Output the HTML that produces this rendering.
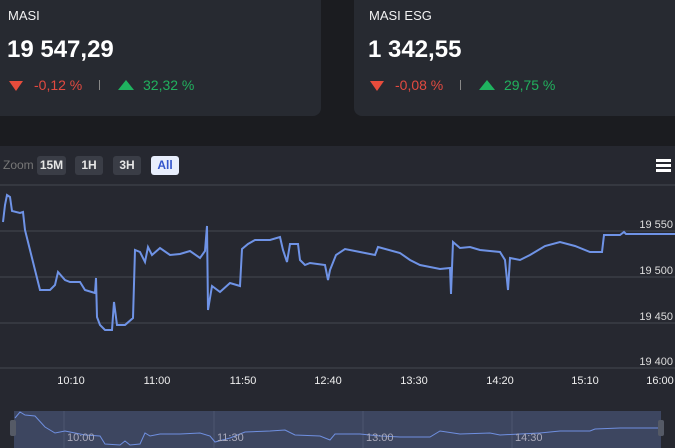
<!DOCTYPE html><html><head><style>
body{margin:0;width:675px;height:448px;background:#1b1c20;position:relative;overflow:hidden;font-family:"Liberation Sans",sans-serif;}
.card{position:absolute;top:-10px;height:126px;background:#272a31;border-radius:0 0 8px 8px;color:#fff}
.t{position:absolute;font-size:13px;color:#f2f2f2}
.big{position:absolute;font-size:24px;font-weight:bold;color:#fff}
.dn{position:absolute;width:0;height:0;border-left:7px solid transparent;border-right:7px solid transparent;border-top:10px solid #e74c3c}
.up{position:absolute;width:0;height:0;border-left:8px solid transparent;border-right:8px solid transparent;border-bottom:10px solid #1fb35f}
.r{position:absolute;font-size:14px;color:#e24a40}.g{position:absolute;font-size:14px;color:#21b15e}
.sep{position:absolute;width:1px;height:10px;background:#888}
.btn{position:absolute;top:156px;height:19px;border-radius:3px;background:#3a3d46;color:#e6e6e6;font-size:12px;font-weight:bold;text-align:center;line-height:19px}
.yl{position:absolute;right:2px;font-size:11px;color:#ddd}
.xl{position:absolute;top:375px;font-size:11px;color:#eee;transform:translateX(-50%)}
.nl{position:absolute;top:432px;font-size:11px;color:#aab}
</style></head><body>
<div class="card" style="left:-10px;width:331px"></div>
<div class="card" style="left:354px;width:340px"></div>
<div class="t" style="left:8px;top:8px">MASI</div>
<div class="big" style="left:7px;top:36px">19 547,29</div>
<div class="dn" style="left:9px;top:81px"></div><div class="r" style="left:34px;top:77px">-0,12 %</div>
<div class="sep" style="left:99px;top:80px"></div>
<div class="up" style="left:118px;top:80px"></div><div class="g" style="left:143px;top:77px">32,32 %</div>
<div class="t" style="left:369px;top:8px">MASI ESG</div>
<div class="big" style="left:368px;top:36px">1 342,55</div>
<div class="dn" style="left:370px;top:81px"></div><div class="r" style="left:395px;top:77px">-0,08 %</div>
<div class="sep" style="left:460px;top:80px"></div>
<div class="up" style="left:479px;top:80px"></div><div class="g" style="left:504px;top:77px">29,75 %</div>
<div style="position:absolute;left:0;top:146px;width:675px;height:302px;background:#262830"></div>
<div style="position:absolute;left:3px;top:158px;font-size:12px;color:#777">Zoom</div>
<div class="btn" style="left:37px;width:29px">15M</div>
<div class="btn" style="left:75px;width:28px">1H</div>
<div class="btn" style="left:113px;width:28px">3H</div>
<div class="btn" style="left:151px;width:28px;background:#e8eefc;color:#3355cc">All</div>
<div style="position:absolute;left:656px;top:159px;width:15px;height:3px;background:#fff;box-shadow:0 5px 0 #fff,0 10px 0 #fff"></div>
<svg style="position:absolute;left:0;top:0" width="675" height="448">
<g stroke="#3a3d45" stroke-width="1.5"><line x1="0" y1="185" x2="675" y2="185"/><line x1="0" y1="231" x2="675" y2="231"/><line x1="0" y1="277" x2="675" y2="277"/><line x1="0" y1="323" x2="675" y2="323"/><line x1="0" y1="368" x2="675" y2="368"/></g>
<polyline fill="none" stroke="#6f93e6" stroke-width="2" points="3,222 5,205 7,195 10,197 12,211 20,213 23,212 25,230 30,250 35,270 40,290 50,290 55,285 58,272 65,280 70,282 80,282 85,290 95,293 96,278 97,317 100,325 105,330 112,330 114,302 117,325 125,325 133,318 135,250 140,252 145,262 148,247 152,255 160,248 170,255 180,254 190,251 200,258 205,251 207,226 208,310 212,286 220,292 230,283 240,286 242,249 248,244 255,240 270,240 280,237 283,250 287,262 290,244 298,244 300,260 305,265 310,263 325,265 328,280 330,270 336,255 345,249 360,252 375,255 378,247 400,253 410,260 420,265 440,269 450,268 451,294 453,242 460,248 470,247 480,250 490,251 500,252 505,260 508,290 510,258 520,260 530,255 545,246 560,242 575,246 590,252 602,252 604,235 620,235 624,232 626,234 675,234"/>
<rect x="14" y="411" width="647" height="37" fill="#3d4660"/>
<g stroke="#4d5670"><line x1="64" y1="411" x2="64" y2="448"/><line x1="214" y1="411" x2="214" y2="448"/><line x1="363" y1="411" x2="363" y2="448"/><line x1="512" y1="411" x2="512" y2="448"/></g>
<polyline fill="none" stroke="#6f8fe0" stroke-width="1" points="15,418 20,412 25,415 35,416 45,427 55,433 65,431 75,433 85,435 100,436 105,444 120,445 125,441 130,445 140,444 145,433 150,436 160,434 180,434 200,433 210,436 215,442 230,438 245,432 270,431 285,430 295,435 320,436 330,440 335,434 360,434 380,436 400,437 430,437 440,431 460,434 490,433 500,435 520,434 540,433 560,431 590,431 595,429 620,428 661,428"/>
</svg>
<div style="position:absolute;left:10px;top:420px;width:6px;height:16px;background:#555a66;border-radius:2px"></div>
<div style="position:absolute;left:658px;top:420px;width:6px;height:16px;background:#555a66;border-radius:2px"></div>
<div class="yl" style="top:219px">19 550</div><div class="yl" style="top:265px">19 500</div>
<div class="yl" style="top:311px">19 450</div><div class="yl" style="top:356px">19 400</div>
<div class="xl" style="left:71px">10:10</div><div class="xl" style="left:157px">11:00</div>
<div class="xl" style="left:243px">11:50</div><div class="xl" style="left:328px">12:40</div>
<div class="xl" style="left:414px">13:30</div><div class="xl" style="left:500px">14:20</div>
<div class="xl" style="left:585px">15:10</div><div class="xl" style="left:660px">16:00</div>
<div class="nl" style="left:67px">10:00</div><div class="nl" style="left:217px">11:30</div>
<div class="nl" style="left:366px">13:00</div><div class="nl" style="left:515px">14:30</div>
</body></html>
